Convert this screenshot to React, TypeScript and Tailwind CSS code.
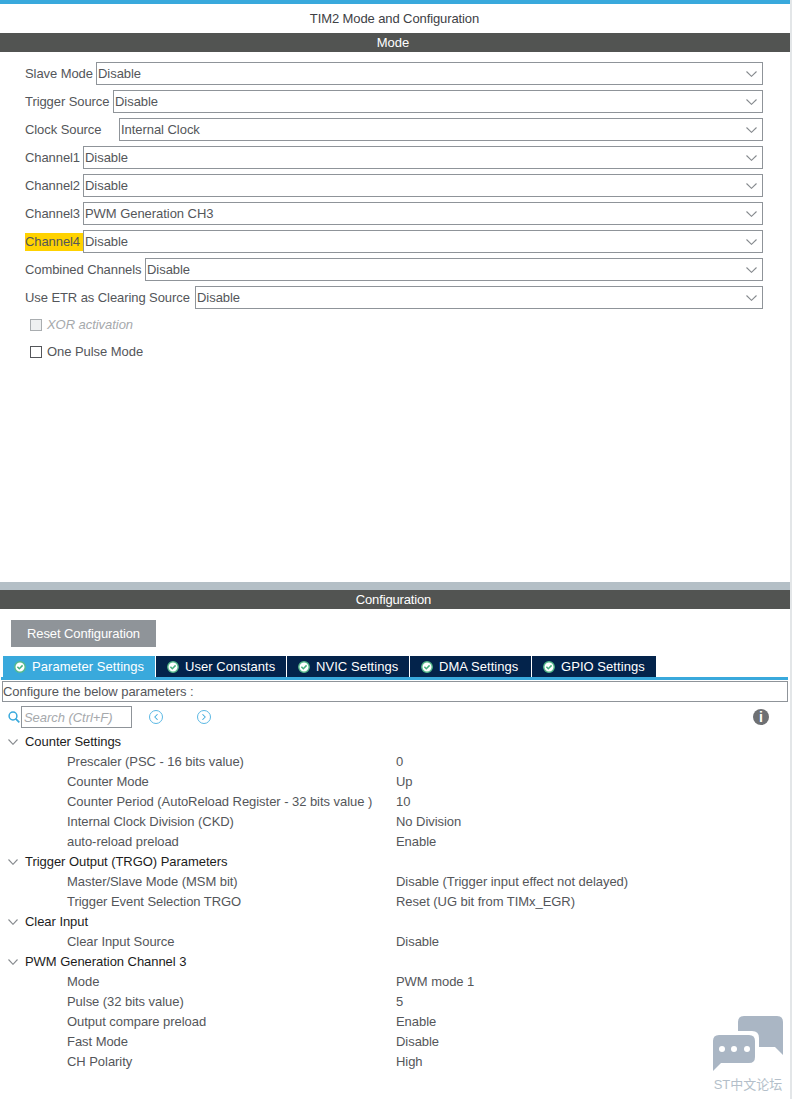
import { ChevronLeft, ChevronRight } from 'lucide-react';

const modeRows = [
  { label: 'Slave Mode', value: 'Disable', width: 'w-[71px]' },
  { label: 'Trigger Source', value: 'Disable', width: 'w-[88px]' },
  { label: 'Clock Source', value: 'Internal Clock', width: 'w-[94px]' },
  { label: 'Channel1', value: 'Disable', width: 'w-[58px]' },
  { label: 'Channel2', value: 'Disable', width: 'w-[58px]' },
  { label: 'Channel3', value: 'PWM Generation CH3', width: 'w-[58px]' },
  { label: 'Channel4', value: 'Disable', width: 'w-[58px]', warn: true },
  { label: 'Combined Channels', value: 'Disable', width: 'w-[120px]' },
  { label: 'Use ETR as Clearing Source', value: 'Disable', width: 'w-[170px]' },
];

const tabs = [
  { name: 'Parameter Settings', width: 'w-[153px]', active: true },
  { name: 'User Constants', width: 'w-[131px]' },
  { name: 'NVIC Settings', width: 'w-[123px]' },
  { name: 'DMA Settings', width: 'w-[122px]' },
  { name: 'GPIO Settings', width: 'w-[125px]' },
];

const groups = [
  {
    title: 'Counter Settings',
    params: [
      ['Prescaler (PSC - 16 bits value)', '0'],
      ['Counter Mode', 'Up'],
      ['Counter Period (AutoReload Register - 32 bits value )', '10'],
      ['Internal Clock Division (CKD)', 'No Division'],
      ['auto-reload preload', 'Enable'],
    ],
  },
  {
    title: 'Trigger Output (TRGO) Parameters',
    params: [
      ['Master/Slave Mode (MSM bit)', 'Disable (Trigger input effect not delayed)'],
      ['Trigger Event Selection TRGO', 'Reset (UG bit from TIMx_EGR)'],
    ],
  },
  {
    title: 'Clear Input',
    params: [['Clear Input Source', 'Disable']],
  },
  {
    title: 'PWM Generation Channel 3',
    params: [
      ['Mode', 'PWM mode 1'],
      ['Pulse (32 bits value)', '5'],
      ['Output compare preload', 'Enable'],
      ['Fast Mode', 'Disable'],
      ['CH Polarity', 'High'],
    ],
  },
];

const CheckBadge = () => (
  <svg width="12" height="12" viewBox="0 0 12 12" className="shrink-0">
    <circle cx="6" cy="6" r="5.2" fill="#ffffff" stroke="#55b98a" strokeWidth="1.4" />
    <path d="M3.4 5.8 5.3 7.7 8.6 4.4" fill="none" stroke="#46b07e" strokeWidth="1.5" />
  </svg>
);

const Caret = ({ width }: { width: number }) => (
  <svg width={width} height="6" viewBox={`0 0 ${width} 6`} className="shrink-0">
    <path d={`M0.5 0.5 L${width / 2} 5.3 L${width - 0.5} 0.5`} fill="none" stroke="#868a8e" strokeWidth="1.1" />
  </svg>
);

const App = () => {
  return (
    <div className="relative flex h-[1099px] w-[792px] flex-col overflow-hidden border-r-2 border-[#e3e6e8] bg-white font-['Liberation_Sans',sans-serif] text-[13px] tracking-[-0.05px] text-[#54565a]">
      <div className="h-1 bg-[#39a9dc]" />
      <div className="flex h-[29px] items-center justify-center pr-[1px] tracking-[-0.1px] text-[#3e4145]">TIM2 Mode and Configuration</div>
      <div className="flex h-[19px] items-center justify-center bg-[#525452] pr-1 text-white">Mode</div>

      {/* Mode */}
      <div className="flex h-[530px] flex-col pl-[25px] pr-[27px] pt-[10px]">
        <div className="flex flex-col gap-[5px]">
          {modeRows.map((row) => (
            <div key={row.label} className="flex h-[23px] items-center">
              <div className={`${row.width} shrink-0 tracking-[-0.08px]`}>
                <span className={row.warn ? 'inline-block h-[18px] w-[58px] bg-[#ffd200] leading-[18px]' : ''}>{row.label}</span>
              </div>
              <div className="flex h-[23px] flex-1 items-center justify-between border border-[#8f9499] pl-[1px] pr-[5px]">
                <span>{row.value}</span>
                <Caret width={11} />
              </div>
            </div>
          ))}
        </div>
        <div className="mt-[8px] flex flex-col gap-[11px] pl-[5px]">
          <label className="flex h-4 items-center gap-[5px] italic text-[#a6a9ac]">
            <span className="h-3 w-3 border border-[#a9adb0] bg-[#eef0f1]" />
            XOR activation
          </label>
          <label className="flex h-4 items-center gap-[5px]">
            <span className="h-3 w-3 border border-[#54565a] bg-white" />
            One Pulse Mode
          </label>
        </div>
      </div>

      {/* Configuration */}
      <div className="h-[8px] bg-[#b4bfc6]" />
      <div className="flex h-[19px] items-center justify-center bg-[#525452] pl-[1px] pr-1 tracking-[-0.15px] text-white">Configuration</div>

      <div className="pl-[11px] pt-[11px]">
        <div className="flex h-[27px] w-[145px] items-center justify-center bg-[#8f9499] tracking-[-0.1px] text-white">Reset Configuration</div>
      </div>

      <div className="mt-[9px] flex h-[21px] pl-[3px]">
        {tabs.map((tab) => (
          <div
            key={tab.name}
            className={`${tab.width} flex items-center gap-[6px] border-r border-white pl-[11px] tracking-[0.05px] text-white ${tab.active ? 'bg-[#39a9dc]' : 'bg-[#03234b]'}`}
          >
            <CheckBadge />
            {tab.name}
          </div>
        ))}
      </div>
      <div className="ml-[1px] mr-[2px] h-[3px] bg-[#39a9dc]" />

      <div className="ml-[2px] mr-[2px] mt-[1px] flex h-[21px] items-center border border-[#8f9499]">Configure the below parameters :</div>

      <div className="relative mt-[4px] flex h-[22px] items-center pl-[8px]">
        <svg width="12" height="12" viewBox="0 0 12 12" className="shrink-0">
          <circle cx="5" cy="5" r="3.9" fill="none" stroke="#39a9dc" strokeWidth="1.5" />
          <path d="M7.8 7.8 11.3 11.3" stroke="#39a9dc" strokeWidth="1.7" />
        </svg>
        <div className="ml-[1px] flex h-[22px] w-[111px] items-center border border-[#8f9499] pl-[2px] pt-[1px] italic text-[#a6a9ac]">Search (Ctrl+F)</div>
        <span className="ml-[17px] flex h-[14px] w-[14px] items-center justify-center rounded-full border-[1.5px] border-[#5bb8e4]">
          <ChevronLeft size={10} strokeWidth={2.5} className="text-[#39a9dc]" />
        </span>
        <span className="ml-[34px] flex h-[14px] w-[14px] items-center justify-center rounded-full border-[1.5px] border-[#5bb8e4]">
          <ChevronRight size={10} strokeWidth={2.5} className="text-[#39a9dc]" />
        </span>
        <span className="absolute right-[21px] top-[3px] flex h-4 w-4 items-center justify-center rounded-full bg-[#6e7073] text-[14px] font-bold tracking-normal text-white">i</span>
      </div>

      {/* Parameter tree */}
      <div className="mt-[4px] flex flex-col">
        {groups.map((group) => (
          <div key={group.title}>
            <div className="flex h-5 items-center gap-[7px] pl-[8px] text-[#1c1c1c]">
              <Caret width={10} />
              {group.title}
            </div>
            {group.params.map(([name, value]) => (
              <div key={name} className="flex h-5 items-center pl-[67px]">
                <div className="w-[329px] shrink-0">{name}</div>
                <div>{value}</div>
              </div>
            ))}
          </div>
        ))}
      </div>

      {/* Watermark */}
      <div className="absolute right-[6px] top-[1016px] flex w-[72px] flex-col items-center">
        <svg width="72" height="56" viewBox="0 0 72 56">
          <path d="M32 0H65Q71 0 71 6V39L63 31H47V22Q47 15 40 15H26V6Q26 0 32 0Z" fill="#aab6c4" />
          <path d="M7 19H37Q43 19 43 25V41Q43 47 37 47H9L1 55V25Q1 19 7 19Z" fill="#aab6c4" />
          <circle cx="10" cy="33" r="3" fill="#fff" />
          <circle cx="22" cy="33" r="3" fill="#fff" />
          <circle cx="35" cy="33" r="3" fill="#fff" />
        </svg>
        <span className="mt-[3px] whitespace-nowrap font-['Liberation_Sans','Noto_Sans_CJK_SC',sans-serif] text-[13px] tracking-normal text-[#b4bfca]">ST中文论坛</span>
      </div>
    </div>
  );
};

export default App;
